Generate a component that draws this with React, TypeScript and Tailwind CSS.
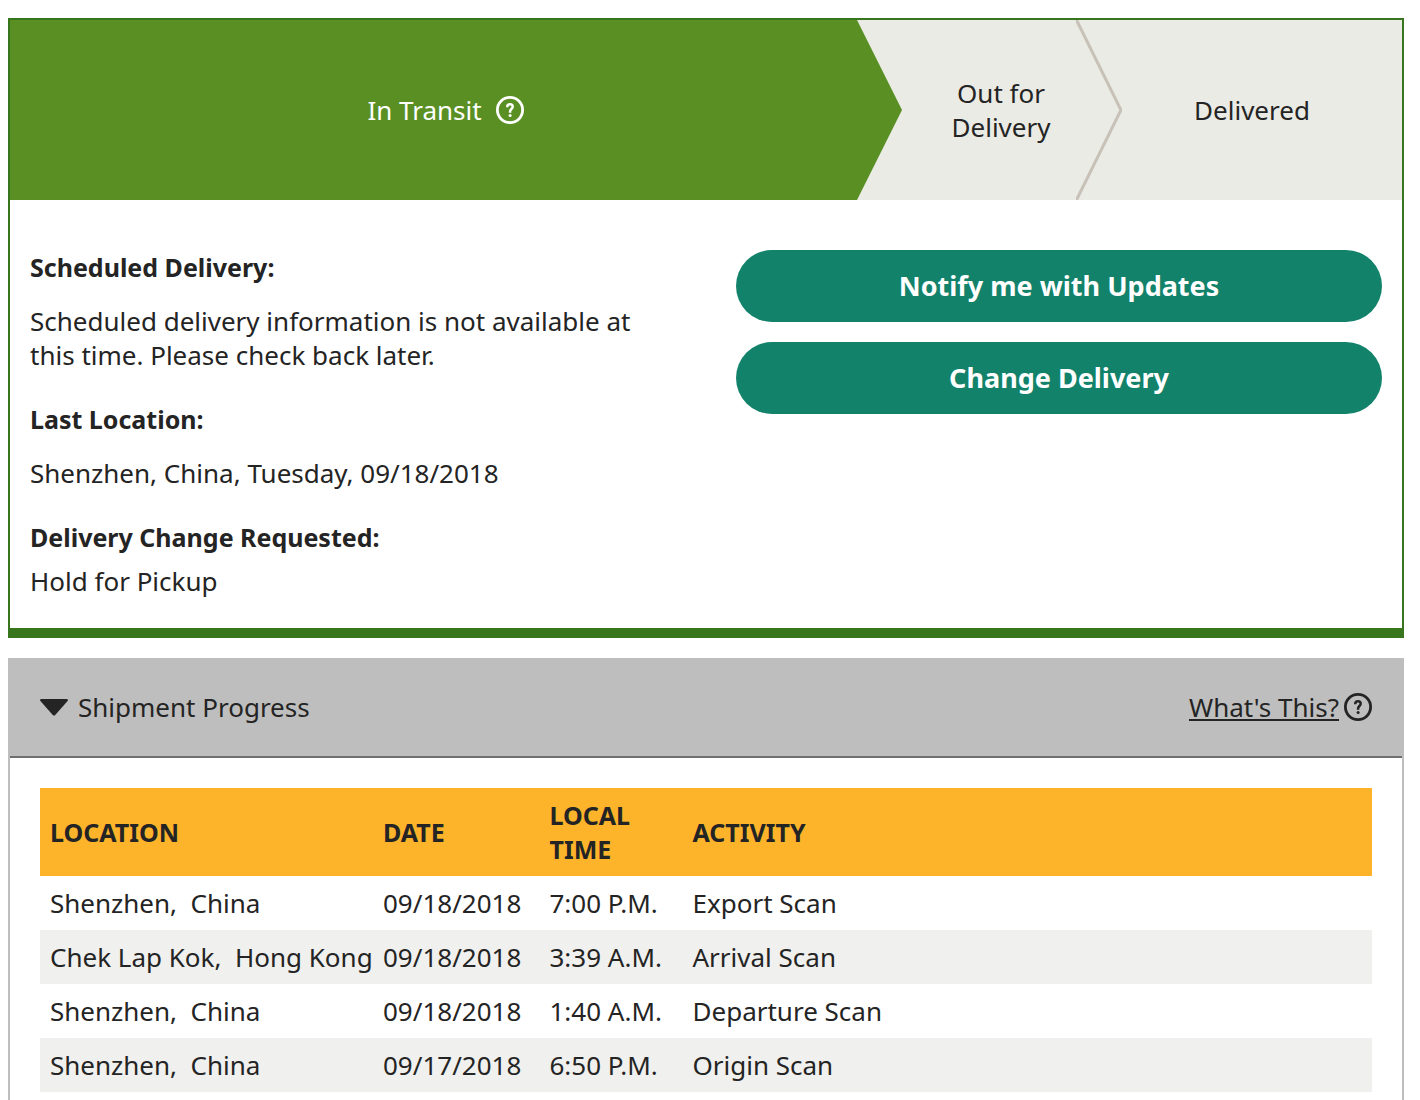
import React from 'react';
import clsx from 'clsx';

interface Scan {
    location: string;
    date: string;
    time: string;
    activity: string;
}

const SCANS: Scan[] = [
    { location: 'Shenzhen,\u00a0 China', date: '09/18/2018', time: '7:00 P.M.', activity: 'Export Scan' },
    { location: 'Chek Lap Kok,\u00a0 Hong Kong', date: '09/18/2018', time: '3:39 A.M.', activity: 'Arrival Scan' },
    { location: 'Shenzhen,\u00a0 China', date: '09/18/2018', time: '1:40 A.M.', activity: 'Departure Scan' },
    { location: 'Shenzhen,\u00a0 China', date: '09/17/2018', time: '6:50 P.M.', activity: 'Origin Scan' },
];

const HelpIcon = () => (
    <svg viewBox="0 0 28 28" className="size-7 shrink-0" fill="none" stroke="currentColor" aria-hidden="true">
        <circle cx="14" cy="14" r="12.6" strokeWidth="2.8" />
        <path d="M11.3 11.2V10.6C11.3 9.2 12.4 8.3 14 8.3C15.6 8.3 16.7 9.3 16.7 10.8C16.7 12.8 14.1 13.2 14.1 15.4V16.8" strokeWidth="2.5" />
        <circle cx="14.1" cy="19.6" r="1.5" fill="currentColor" stroke="none" />
    </svg>
);

const StatusBar = () => (
    <div className="flex h-[180px] bg-[#eaebe4] text-center">
        <div className="flex min-w-0 flex-1 text-white">
            <div className="flex flex-1 items-center justify-center gap-[14px] bg-[#5a9023] pl-6">
                In Transit
                <button type="button" aria-label="About In Transit">
                    <HelpIcon />
                </button>
            </div>
            <svg viewBox="0 0 45 180" className="w-[45px] shrink-0" aria-hidden="true">
                <path d="M0 0L45 90L0 180Z" fill="#5a9023" />
            </svg>
        </div>
        <div className="flex w-[220px] shrink-0">
            <div className="flex flex-1 items-center justify-center pl-6">
                Out for
                <br />
                Delivery
            </div>
            <svg viewBox="0 0 46 180" className="w-[46px] shrink-0" fill="none" aria-hidden="true">
                <path d="M0 -1L45 90L0 181" stroke="#c8c1b8" strokeWidth="3" />
            </svg>
        </div>
        <div className="flex w-[280px] shrink-0 items-center justify-center pr-5">Delivered</div>
    </div>
);

const ActionButton = ({ children }: { children: React.ReactNode }) => (
    <button type="button" className="h-[72px] w-full rounded-full bg-[#12826a] text-[27px] font-bold text-white">
        {children}
    </button>
);

export default function App() {
    return (
        <div className="flex min-h-screen flex-col bg-white pt-[18px] pr-4 pl-2 font-['Noto_Sans',sans-serif] text-[26px] leading-[34px] text-[#242424]">
            <section className="border-2 border-b-10 border-[#37761d]">
                <StatusBar />
                <div className="grid grid-cols-2 gap-[60px] px-5 pt-[50px] pb-[30px]">
                    <dl>
                        <dt className="text-[25px] leading-[34px] font-bold">Scheduled Delivery:</dt>
                        <dd className="mt-5">
                            Scheduled delivery information is not available at this time. Please check back later.
                        </dd>
                        <dt className="mt-[30px] text-[25px] leading-[34px] font-bold">Last Location:</dt>
                        <dd className="mt-5">Shenzhen, China, Tuesday, 09/18/2018</dd>
                        <dt className="mt-[30px] text-[25px] leading-[34px] font-bold">Delivery Change Requested:</dt>
                        <dd className="mt-[10px]">Hold for Pickup</dd>
                    </dl>
                    <div className="flex flex-col gap-5">
                        <ActionButton>Notify me with Updates</ActionButton>
                        <ActionButton>Change Delivery</ActionButton>
                    </div>
                </div>
            </section>

            <section className="mt-5 flex-1 border-x-2 border-[#bebebe]">
                <div className="flex h-[100px] items-center justify-between border-b-2 border-[#6f6f6f] bg-[#bebebe] px-[30px]">
                    <button type="button" className="flex items-center gap-[10px]" aria-expanded="true">
                        <svg viewBox="0 0 28 18" className="h-[18px] w-7" aria-hidden="true">
                            <path d="M1 1H27Q28.5 1.6 27.6 3L15 17.2Q14 18 13 17.2L0.4 3Q-0.5 1.6 1 1Z" fill="#242424" />
                        </svg>
                        Shipment Progress
                    </button>
                    <a href="#whats-this" className="flex items-center gap-[5px]">
                        <span className="underline decoration-2 underline-offset-2">What's This?</span>
                        <HelpIcon />
                    </a>
                </div>
                <div className="px-[30px] pt-[30px]">
                    <table className="w-full table-fixed text-left">
                        <thead className="text-[25px] leading-[34px]">
                            <tr className="bg-[#fdb42b]">
                                <th className="w-[25%] p-[10px] font-bold">LOCATION</th>
                                <th className="w-[12.5%] p-[10px] font-bold">DATE</th>
                                <th className="w-[143px] p-[10px] font-bold">
                                    LOCAL
                                    <br />
                                    TIME
                                </th>
                                <th className="p-[10px] font-bold">ACTIVITY</th>
                            </tr>
                        </thead>
                        <tbody>
                            {SCANS.map((scan, idx) => (
                                <tr key={idx} className={clsx('whitespace-nowrap', idx % 2 === 1 && 'bg-[#f0f0ee]')}>
                                    <td className="p-[10px]">{scan.location}</td>
                                    <td className="p-[10px]">{scan.date}</td>
                                    <td className="p-[10px]">{scan.time}</td>
                                    <td className="p-[10px]">{scan.activity}</td>
                                </tr>
                            ))}
                        </tbody>
                    </table>
                </div>
            </section>
        </div>
    );
}
